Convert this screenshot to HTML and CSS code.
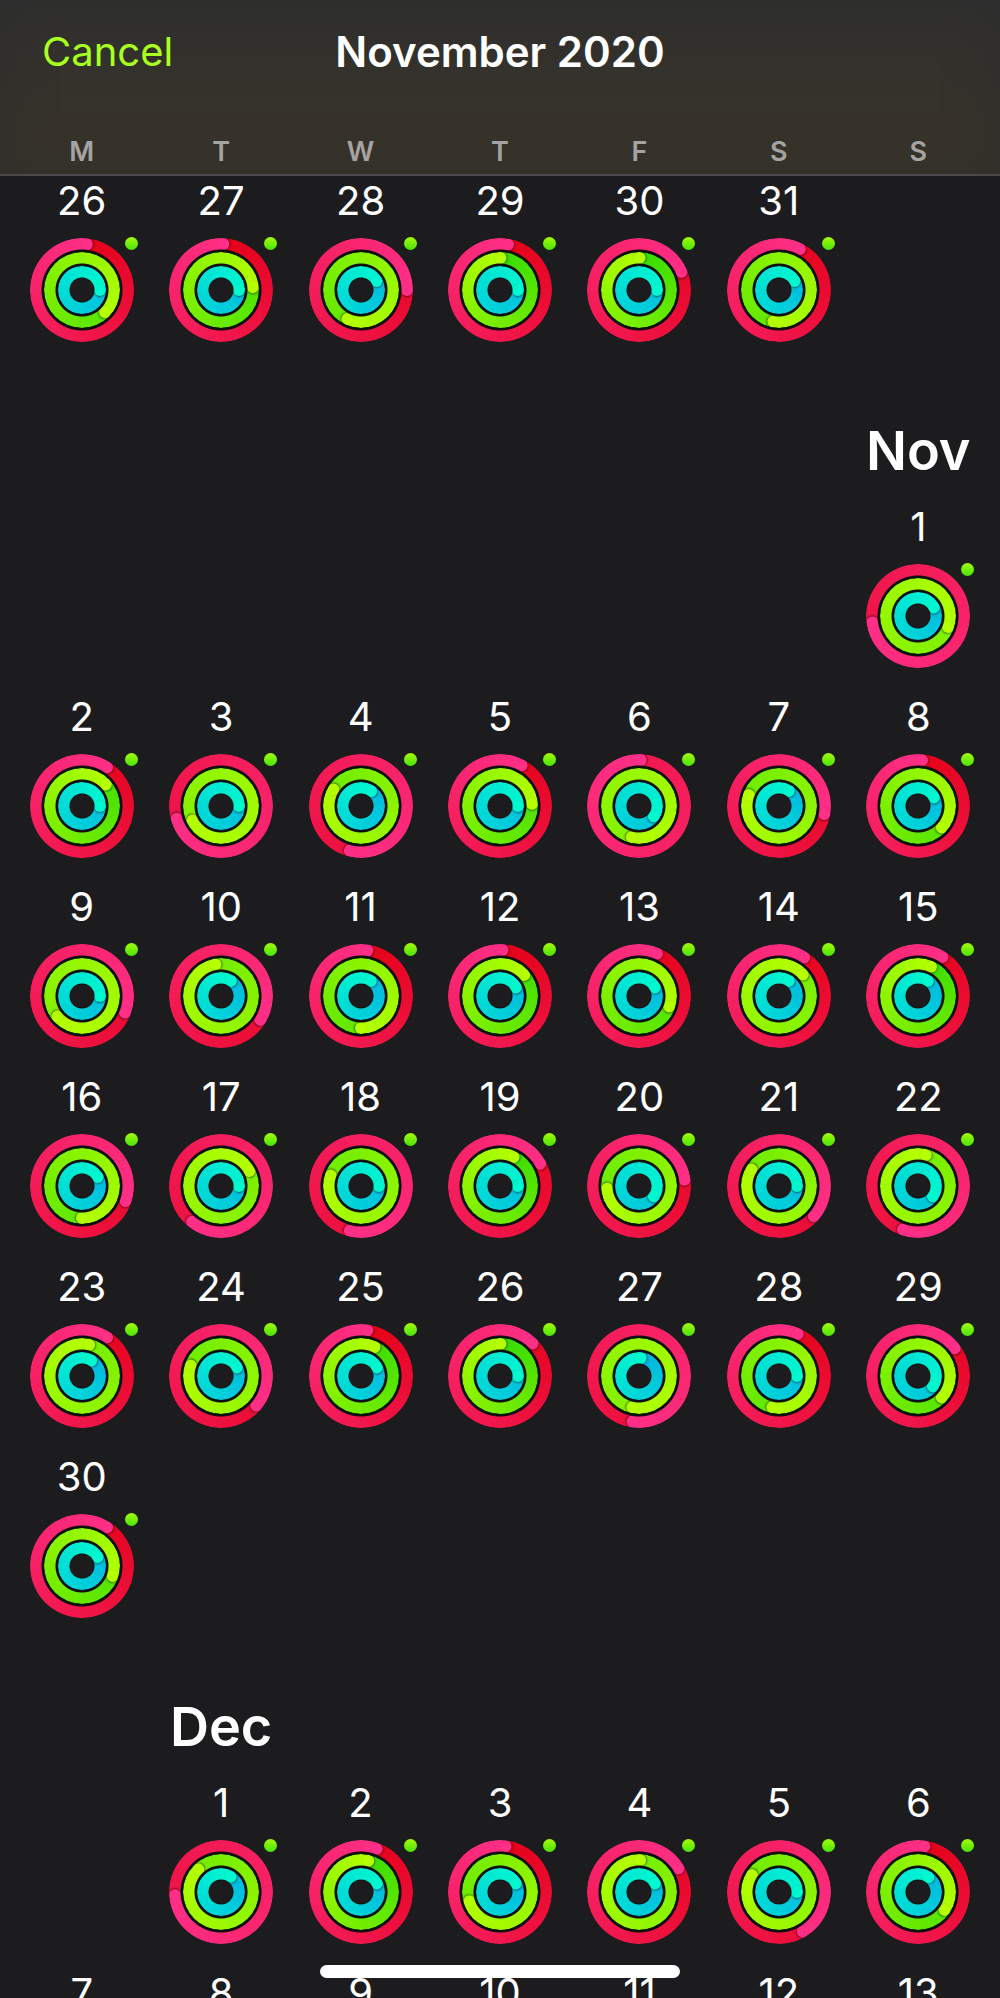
FILE: index.html
```
<!DOCTYPE html>
<html lang="en">
<head>
<meta charset="UTF-8">
<meta name="viewport" content="width=device-width, initial-scale=1.0">
<title>November 2020</title>

<link rel="stylesheet" href="styles.css">
</head>

<body>

<header class="header">
  <div class="navbar">
    <button class="cancel" type="button">Cancel</button>
    <h1 class="title">November 2020</h1>
  </div>
  <div class="week weekdays">
    <span>M</span>
    <span>T</span>
    <span>W</span>
    <span>T</span>
    <span>F</span>
    <span>S</span>
    <span>S</span>
  </div>
</header>

<main class="calendar" id="calendar"></main>

<div class="home-indicator"></div>

<script src="calendar.js"></script>

</body>
</html>
```
FILE: styles.css
```
*{
    box-sizing:border-box;
}

body{
    margin:0;
    height:100vh;
    display:flex;
    flex-direction:column;
    overflow:hidden;
    position:relative;
    background:#1c1c1e;
    color:white;
    font-family:Inter, "Liberation Sans", sans-serif;
}

/* HEADER */
.header{
    background:linear-gradient(#31302e, #35322c 50%, #38342a);
    border-bottom:2px solid #4a494a;
    box-shadow:inset 0 0 50px rgba(40,42,44,0.5);
}

.navbar{
    display:grid;
    grid-template-columns:1fr auto 1fr;
    align-items:center;
    padding:26px 42px 0;
}

.cancel{
    justify-self:start;
    margin:0;
    padding:0;
    border:none;
    background:none;
    color:#a9ff1f;
    font-family:inherit;
    font-size:40px;
    line-height:52px;
    cursor:pointer;
}

.title{
    margin:0;
    font-size:42px;
    line-height:52px;
    font-weight:600;
}

.week{
    display:grid;
    grid-template-columns:repeat(7, 1fr);
    padding:0 12px;
    text-align:center;
}

.weekdays{
    padding-top:58px;
    padding-bottom:6px;
    color:#a5a4a2;
    font-size:27px;
    font-weight:600;
    line-height:32px;
}

/* CALENDAR */
.calendar{
    flex:1;
    min-height:0;
    padding-top:1px;
    overflow:hidden;
}

.month-name{
    margin:50px 0 18px;
    font-size:54px;
    line-height:68px;
    font-weight:600;
}

.day{
    height:190px;
    display:flex;
    flex-direction:column;
    align-items:center;
    gap:13px;
}

.number{
    font-size:40px;
    line-height:48px;
}

/* RINGS */
.rings{
    position:relative;
    width:104px;
    height:104px;
    border-radius:50%;
    background:radial-gradient(closest-side, #1c1c1e 11px, #0d110e 12px, #0d110e 41px, transparent 42px);
}

.ring{
    position:absolute;
    inset:calc(52px - var(--radius));
    border-radius:50%;
    background:conic-gradient(from var(--head), var(--tail), var(--tip));
    -webkit-mask:radial-gradient(closest-side, transparent calc(100% - 12px), black calc(100% - 11px));
    mask:radial-gradient(closest-side, transparent calc(100% - 12px), black calc(100% - 11px));
}

.ring::after{
    content:"";
    position:absolute;
    top:0;
    left:calc(50% - 6px);
    width:12px;
    height:12px;
    border-radius:50%;
    background:var(--tip);
    box-shadow:1px 0 2px rgba(0,0,0,0.5);
    transform-origin:6px var(--radius);
    transform:rotate(var(--head));
}

.move{
    --radius:52px;
    --tip:#ff2f87;
}

.exercise{
    --radius:38px;
    --tip:#b4ff00;
}

.stand{
    --radius:24px;
    --tip:#00f8d0;
}

.dot{
    position:absolute;
    top:-1px;
    right:-4px;
    width:13px;
    height:13px;
    border-radius:50%;
    background:linear-gradient(#a4fa0a, #48e40a);
}

.home-indicator{
    position:absolute;
    left:50%;
    bottom:20px;
    width:36%;
    height:13px;
    border-radius:7px;
    background:white;
    transform:translateX(-50%);
}
```
FILE: calendar.js
```
/* each day: [number, move, exercise, stand], the rings in degrees travelled */
let months = [
    {name:"", start:0, days:[
        [26,366,494,450], [27,363,445,450], [28,450,565,420],
        [29,370,361,450], [30,427,361,450], [31,387,550,420]
    ]},
    {name:"Nov", start:6, days:[
        [1,622,830,422],
        [2,393,408,450], [3,614,963,450], [4,554,661,394], [5,388,446,450],
        [6,722,913,485], [7,460,650,393], [8,365,492,422],
        [9,471,950,450], [10,481,710,393], [11,368,540,393], [12,363,409,422],
        [13,383,469,422], [14,393,768,393], [15,392,384,393],
        [16,469,540,420], [17,579,782,450], [18,554,649,450], [19,421,385,450],
        [20,442,625,485], [21,491,661,450], [22,559,734,485],
        [23,393,733,391], [24,490,649,422], [25,368,385,422], [26,405,361,450],
        [27,548,912,365], [28,384,552,450], [29,413,492,485],
        [30,393,468,420]
    ]},
    {name:"Dec", start:1, days:[
        [1,626,675,392], [2,380,373,422], [3,367,613,422],
        [4,419,722,422], [5,509,662,450], [6,368,484,395],
        [7], [8], [9], [10], [11], [12], [13]
    ]}
];

let rings = [
    {name:"move", from:[228,0,22], to:[255,47,135]},
    {name:"exercise", from:[55,220,0], to:[180,255,0]},
    {name:"stand", from:[0,178,226], to:[0,248,208]}
];

/* colour one full turn behind the head */
function tailColor(ring, degrees){
    let t = (degrees - 360) / degrees;
    let rgb = ring.from.map((c, i) => Math.round(c + (ring.to[i] - c) * t));
    return "rgb(" + rgb.join(",") + ")";
}

function ringsHtml(values){
    let html = "";
    rings.forEach(function(ring, i){
        html += `<span class="ring ${ring.name}" style="--head:${values[i] % 360}deg;--tail:${tailColor(ring, values[i])}"></span>`;
    });
    return `<div class="rings">${html}<span class="dot"></span></div>`;
}

function monthHtml(month){
    let column = month.start + 1;
    let html = "";

    if(month.name){
        html += `<div class="week"><h2 class="month-name" style="grid-column:${column}">${month.name}</h2></div>`;
    }

    html += `<div class="week">`;
    month.days.forEach(function(day, i){
        let place = i === 0 ? ` style="grid-column:${column}"` : "";
        let values = day.slice(1);
        html += `<div class="day"${place}><span class="number">${day[0]}</span>${values.length ? ringsHtml(values) : ""}</div>`;
    });
    return html + `</div>`;
}

document.getElementById("calendar").innerHTML = months.map(monthHtml).join("");
```
